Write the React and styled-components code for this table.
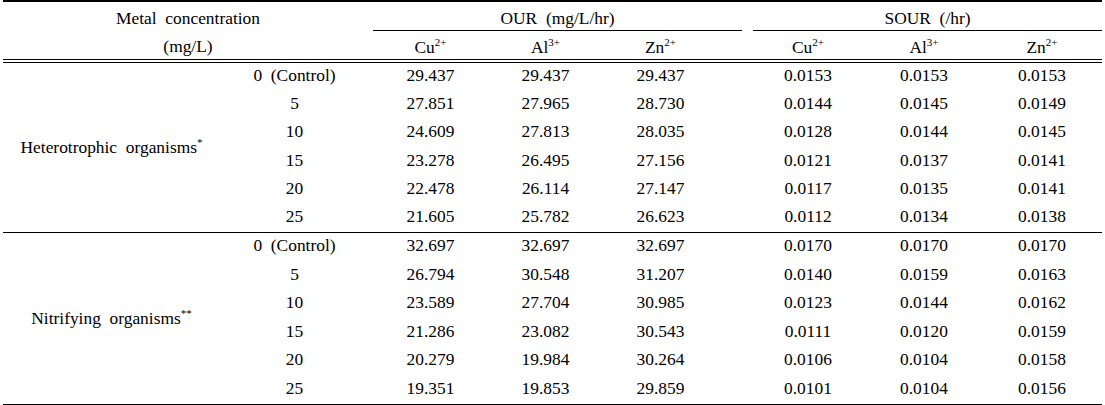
import React from "react";
import styled, { createGlobalStyle } from "styled-components";

const Global = createGlobalStyle`
  html, body { margin: 0; padding: 0; background: #fff; }
  body { font-family: "Liberation Serif", "Times New Roman", serif; color: #000; }
`;

const COLS = "213px 157px 115px 115px 115px 32px 116px 116px 120px";

const Table = styled.div`
  width: 1099px;
  margin-left: 3px;
  border-top: 2px solid #000;
  border-bottom: 2px solid #000;
  font-size: 17.4px;
`;

const Header = styled.div`
  display: grid;
  grid-template-columns: ${COLS};
  grid-template-rows: 29px 28px;
  border-bottom: 4px double #000;
`;

const MetalHead = styled.div`
  grid-column: 1 / 3;
  grid-row: 1 / 3;
  padding-top: 2px;
  text-align: center;
  line-height: 28px;
  white-space: pre;
`;

const GroupHead = styled.div`
  grid-row: 1;
  grid-column: ${(p) => p.$cols};
  margin: ${(p) => p.$margin};
  border-bottom: 1px solid #000;
  text-align: center;
  line-height: 28px;
  padding-top: 2px;
  box-sizing: border-box;
  white-space: pre;
`;

const SubHead = styled.div`
  grid-row: 2;
  grid-column: ${(p) => p.$col};
  text-align: center;
  line-height: 28px;
  padding-top: 2px;
`;

const Sup = styled.span`
  font-size: 11px;
  vertical-align: 7px;
  line-height: 0;
`;

const Group = styled.div`
  display: grid;
  grid-template-columns: ${COLS};
  grid-template-rows: repeat(6, 1fr);
  height: ${(p) => p.$h}px;
  border-top: ${(p) => (p.$sep ? "1px solid #000" : "none")};
`;

const Label = styled.div`
  grid-column: 1;
  grid-row: 1 / 7;
  align-self: center;
  text-align: center;
  padding-left: 4px;
  white-space: pre;
`;

const Cell = styled.div`
  grid-column: ${(p) => p.$col};
  align-self: center;
  margin-bottom: 3px;
  text-align: center;
  white-space: pre;
`;

const valueCols = [3, 4, 5, 7, 8, 9];

const groups = [
  {
    label: "Heterotrophic  organisms",
    mark: "*",
    h: 169,
    rows: [
      ["0  (Control)", "29.437", "29.437", "29.437", "0.0153", "0.0153", "0.0153"],
      ["5", "27.851", "27.965", "28.730", "0.0144", "0.0145", "0.0149"],
      ["10", "24.609", "27.813", "28.035", "0.0128", "0.0144", "0.0145"],
      ["15", "23.278", "26.495", "27.156", "0.0121", "0.0137", "0.0141"],
      ["20", "22.478", "26.114", "27.147", "0.0117", "0.0135", "0.0141"],
      ["25", "21.605", "25.782", "26.623", "0.0112", "0.0134", "0.0138"],
    ],
  },
  {
    label: "Nitrifying  organisms",
    mark: "**",
    h: 171,
    sep: true,
    rows: [
      ["0  (Control)", "32.697", "32.697", "32.697", "0.0170", "0.0170", "0.0170"],
      ["5", "26.794", "30.548", "31.207", "0.0140", "0.0159", "0.0163"],
      ["10", "23.589", "27.704", "30.985", "0.0123", "0.0144", "0.0162"],
      ["15", "21.286", "23.082", "30.543", "0.0111", "0.0120", "0.0159"],
      ["20", "20.279", "19.984", "30.264", "0.0106", "0.0104", "0.0158"],
      ["25", "19.351", "19.853", "29.859", "0.0101", "0.0104", "0.0156"],
    ],
  },
];

const ions = [
  ["Cu", "2+"],
  ["Al", "3+"],
  ["Zn", "2+"],
];

export default function App() {
  return (
    <>
      <Global />
      <Table>
        <Header>
          <MetalHead>
            {"Metal  concentration"}
            <br />
            {"(mg/L)"}
          </MetalHead>
          <GroupHead $cols="3 / 7" $margin="0 8px 0 0">
            {"OUR  (mg/L/hr)"}
          </GroupHead>
          <GroupHead $cols="7 / 10" $margin="0 0 0 3px">
            {"SOUR  (/hr)"}
          </GroupHead>
          {[...ions, ...ions].map(([el, ch], i) => (
            <SubHead key={i} $col={valueCols[i]}>
              {el}
              <Sup>{ch}</Sup>
            </SubHead>
          ))}
        </Header>
        {groups.map((g) => (
          <Group key={g.label} $h={g.h} $sep={g.sep}>
            <Label>
              {g.label}
              <Sup>{g.mark}</Sup>
            </Label>
            {g.rows.map((r, ri) =>
              r.map((v, ci) => (
                <Cell
                  key={ri + "-" + ci}
                  $col={ci === 0 ? 2 : valueCols[ci - 1]}
                  style={{ gridRow: ri + 1 }}
                >
                  {v}
                </Cell>
              ))
            )}
          </Group>
        ))}
      </Table>
    </>
  );
}
